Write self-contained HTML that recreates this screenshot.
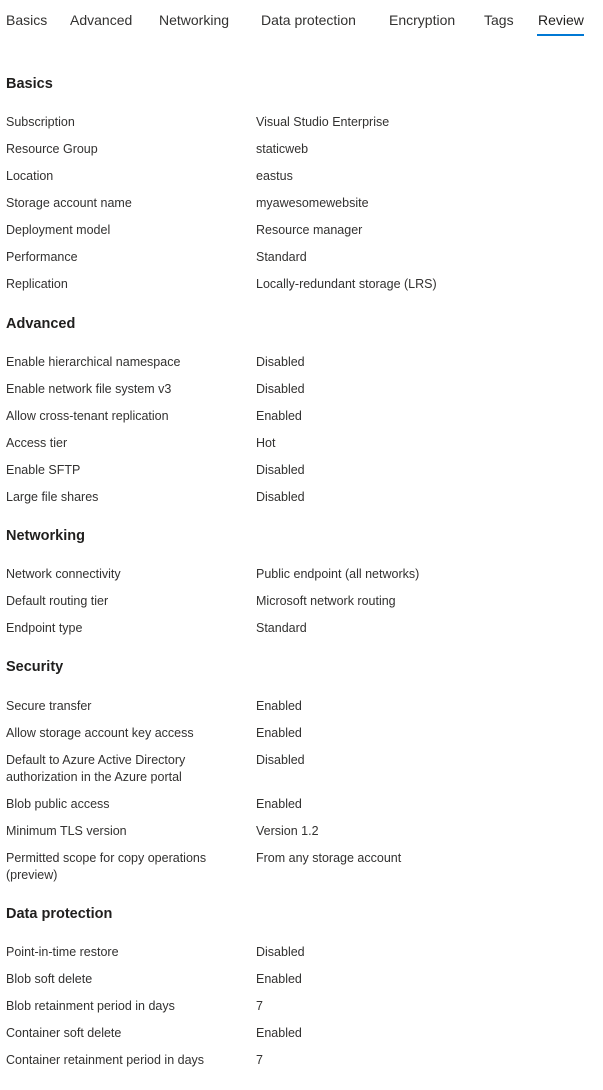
<!DOCTYPE html><html><head><style>
body{margin:0;width:603px;height:1090px;background:#fff;font-family:"Liberation Sans",sans-serif;color:#323130;position:relative;overflow:hidden}
div{position:absolute;white-space:nowrap}
.t{top:12px;font-size:14px;line-height:16px}
.h{left:6px;font-size:14.5px;font-weight:bold;line-height:18px;color:#201f1e}
.r{font-size:12.5px;line-height:17px}
</style></head><body>
<div class="t" style="left:6px">Basics</div>
<div class="t" style="left:70px">Advanced</div>
<div class="t" style="left:159px">Networking</div>
<div class="t" style="left:261px">Data protection</div>
<div class="t" style="left:389px">Encryption</div>
<div class="t" style="left:484px">Tags</div>
<div class="t" style="left:538px;color:#201f1e">Review</div>
<div style="left:537px;top:34px;width:47px;height:2px;background:#0078d4"></div>
<script>
var d=[
["h",82,"Basics"],
[121,"Subscription","Visual Studio Enterprise"],
[148,"Resource Group","staticweb"],
[175,"Location","eastus"],
[202,"Storage account name","myawesomewebsite"],
[229,"Deployment model","Resource manager"],
[256,"Performance","Standard"],
[283,"Replication","Locally-redundant storage (LRS)"],
["h",322,"Advanced"],
[361,"Enable hierarchical namespace","Disabled"],
[388,"Enable network file system v3","Disabled"],
[415,"Allow cross-tenant replication","Enabled"],
[442,"Access tier","Hot"],
[469,"Enable SFTP","Disabled"],
[496,"Large file shares","Disabled"],
["h",534,"Networking"],
[573,"Network connectivity","Public endpoint (all networks)"],
[600,"Default routing tier","Microsoft network routing"],
[627,"Endpoint type","Standard"],
["h",665,"Security"],
[705,"Secure transfer","Enabled"],
[732,"Allow storage account key access","Enabled"],
[759,"Default to Azure Active Directory<br>authorization in the Azure portal","Disabled"],
[803,"Blob public access","Enabled"],
[830,"Minimum TLS version","Version 1.2"],
[857,"Permitted scope for copy operations<br>(preview)","From any storage account"],
["h",912,"Data protection"],
[951,"Point-in-time restore","Disabled"],
[978,"Blob soft delete","Enabled"],
[1005,"Blob retainment period in days","7"],
[1032,"Container soft delete","Enabled"],
[1059,"Container retainment period in days","7"]];
var h="";
d.forEach(function(e){
if(e[0]=="h")h+='<div class="h" style="top:'+(e[1]-7)+'px">'+e[2]+'</div>';
else h+='<div class="r" style="left:6px;top:'+(e[0]-7)+'px">'+e[1]+'</div><div class="r" style="left:256px;top:'+(e[0]-7)+'px">'+e[2]+'</div>';
});
document.body.insertAdjacentHTML("beforeend",h);
</script>
</body></html>
